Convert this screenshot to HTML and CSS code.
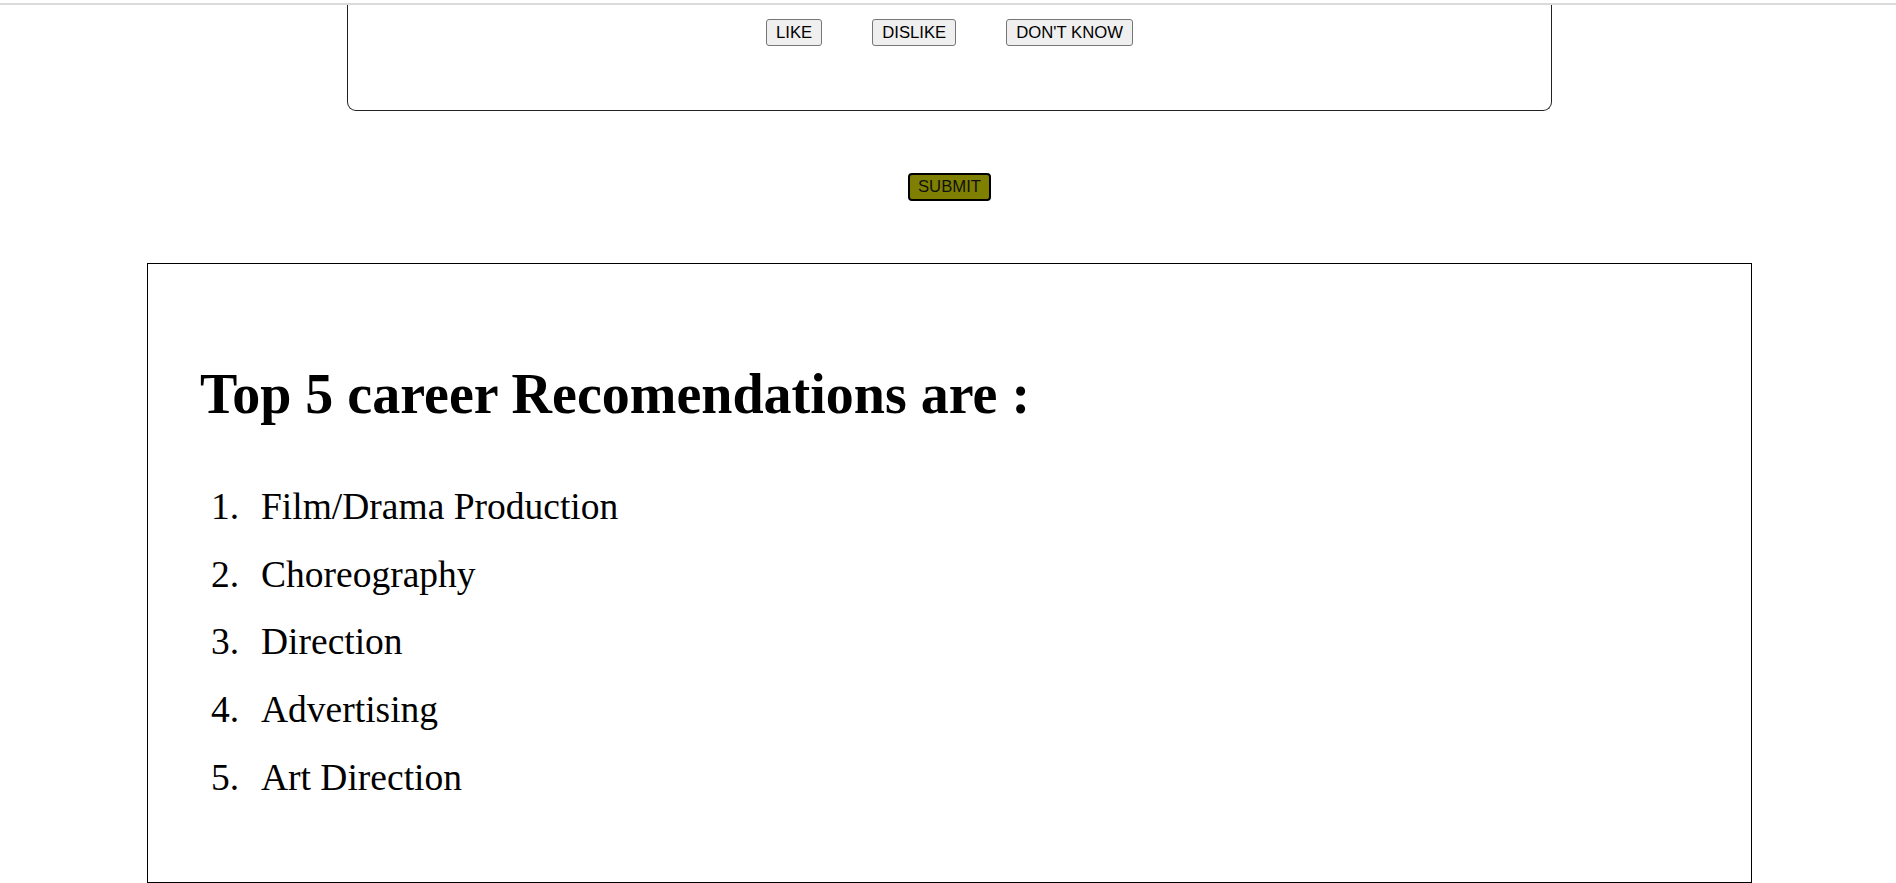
FILE: index.html
```html
<!DOCTYPE html>
<html lang="en">
<head>
<meta charset="utf-8">
<title>Career Recommendations</title>
<link rel="stylesheet" href="styles.css">
</head>
<body>
<div class="topbar"></div>
<main class="page">
  <section class="question-card">
    <div class="choices">
      <button class="choice" type="button">LIKE</button>
      <button class="choice" type="button">DISLIKE</button>
      <button class="choice" type="button">DON'T KNOW</button>
    </div>
  </section>
  <div class="submit-row">
    <button class="submit" type="submit">SUBMIT</button>
  </div>
  <section class="results">
    <h1 class="results-title">Top 5 career Recomendations are :</h1>
    <ol class="results-list">
      <li>Film/Drama Production</li>
      <li>Choreography</li>
      <li>Direction</li>
      <li>Advertising</li>
      <li>Art Direction</li>
    </ol>
  </section>
</main>
</body>
</html>
```
FILE: styles.css
```css
html, body {
  margin: 0;
  padding: 0;
  background: #ffffff;
}

body {
  font-family: "Liberation Serif", "Times New Roman", serif;
  color: #000;
  overflow: hidden;
}

.topbar {
  height: 3px;
  border-bottom: 2px solid #dadada;
  background: #ffffff;
}

.page {
  padding-left: 3px;
  display: flex;
  flex-direction: column;
  align-items: center;
}

.question-card {
  box-sizing: border-box;
  width: 1205px;
  height: 106px;
  border: 1px solid #222;
  border-top: none;
  border-radius: 0 0 9px 9px;
  padding-top: 14px;
}

.choices {
  display: flex;
  justify-content: center;
  gap: 50px;
}

.choice {
  box-sizing: border-box;
  height: 27px;
  padding: 0 9px;
  margin: 0;
  font-family: "Liberation Sans", Arial, sans-serif;
  font-size: 16.7px;
  color: #000;
  background: #efefef;
  border: 1px solid #767676;
  border-radius: 3px;
}

.submit-row {
  margin-top: 62px;
  display: flex;
  justify-content: center;
}

.submit {
  box-sizing: border-box;
  height: 28px;
  padding: 0 8px;
  margin: 0;
  font-family: "Liberation Sans", Arial, sans-serif;
  font-size: 16.7px;
  color: #111;
  background: #808000;
  border: 2px solid #000;
  border-radius: 4px;
}

.results {
  box-sizing: border-box;
  width: 1605px;
  margin-top: 62px;
  border: 1px solid #000;
  padding: 60px 52px 59px 52px;
}

.results-title {
  margin: 38px 0 0 0;
  font-size: 56px;
  font-weight: bold;
  line-height: normal;
}

.results-list {
  margin: 59px 0 0 0;
  padding-left: 61px;
  font-size: 37.5px;
}

.results-list li {
  line-height: 43px;
  margin-bottom: 24.7px;
}

.results-list li::marker {
  content: counter(list-item) ".\2002\200A";
}
```
